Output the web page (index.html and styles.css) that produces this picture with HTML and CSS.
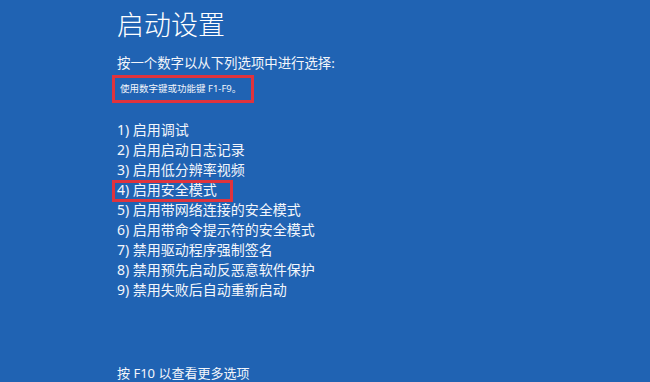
FILE: index.html
```html
<!DOCTYPE html>
<html lang="zh-CN">
<head>
    <meta charset="UTF-8">
    <meta name="viewport" content="width=device-width, initial-scale=1.0">
    <title>启动设置</title>
    <link rel="stylesheet" href="styles.css">
</head>
<body>

    <div class="screen">
        <h1 class="title">启动设置</h1>
        <p class="prompt">按一个数字以从下列选项中进行选择:</p>
        <div class="hint">使用数字键或功能键 F1-F9。</div>

        <ol class="options">
            <li>1) 启用调试</li>
            <li>2) 启用启动日志记录</li>
            <li>3) 启用低分辨率视频</li>
            <li class="marked">4) 启用安全模式</li>
            <li>5) 启用带网络连接的安全模式</li>
            <li>6) 启用带命令提示符的安全模式</li>
            <li>7) 禁用驱动程序强制签名</li>
            <li>8) 禁用预先启动反恶意软件保护</li>
            <li>9) 禁用失败后自动重新启动</li>
        </ol>

        <p class="more">按 F10 以查看更多选项</p>
    </div>

</body>
</html>
```

FILE: styles.css
```css
/* Full screen blue boot menu */
html, body {
    margin: 0;
    padding: 0;
    width: 100%;
    height: 100%;
    overflow: hidden;
}

body {
    background: #2063b3;
    color: #f3f6fb;
    font-family: "Noto Sans", "Noto Sans CJK SC", sans-serif;
}

.screen {
    padding: 8px 0 0 117px;
}

.title {
    margin: 0;
    font-size: 27px;
    font-weight: 300;
    line-height: 34px;
    color: #ffffff;
}

.prompt {
    margin: 11px 0 0;
    font-size: 13.4px;
    line-height: 20px;
}

/* red marker drawn around the hint line */
.hint {
    width: fit-content;
    margin: 2px 0 0 -5px;
    padding: 0 10px 0 5px;
    border: 3px solid #e0333d;
    font-size: 9.5px;
    line-height: 22px;
}

.options {
    list-style: none;
    margin: 17px 0 0;
    padding: 0;
    font-size: 14px;
    line-height: 20px;
}

.options .marked {
    width: fit-content;
    margin: 0 0 -2px -5px;
    padding: 0 16px 2px 5px;
    outline: 3px solid #e0333d;
    outline-offset: -3px;
}

.more {
    margin: 63px 0 0;
    font-size: 13px;
    line-height: 20px;
}
```
